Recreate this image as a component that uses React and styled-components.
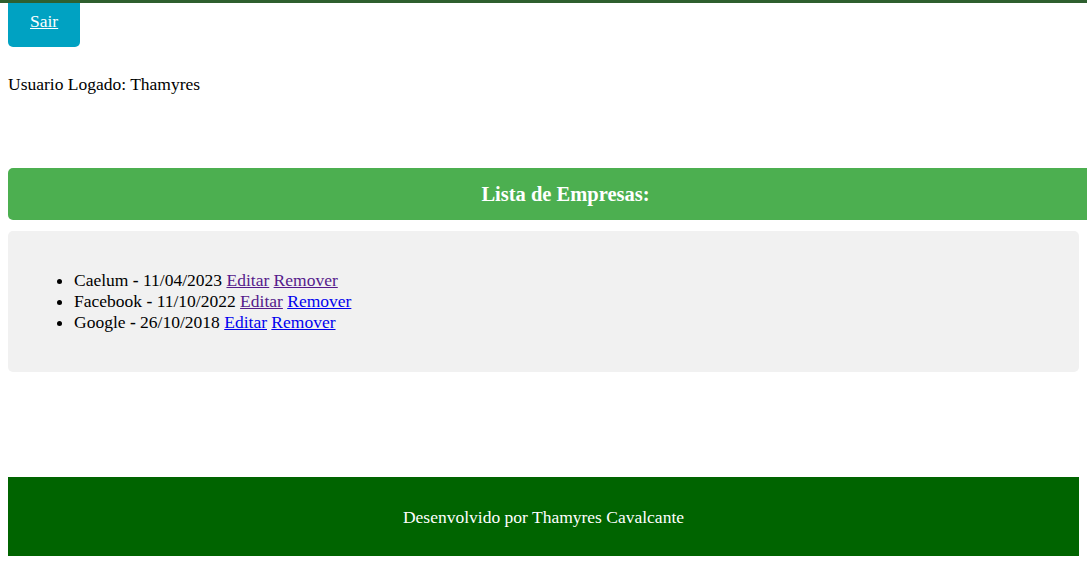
import React from "react";
import styled, { createGlobalStyle } from "styled-components";

const GlobalStyle = createGlobalStyle`
  html, body {
    margin: 0;
    padding: 0;
  }
  body {
    font-family: "Liberation Serif", "Times New Roman", serif;
    font-size: 17.5px;
    line-height: 20px;
    color: #000;
    background: #fff;
    overflow-x: hidden;
  }
`;

const TopStrip = styled.div`
  height: 3px;
  background: #2e5f2f;
`;

const Page = styled.div`
  padding: 0 8px;
`;

const LogoutButton = styled.a`
  display: inline-block;
  background: #00a2c2;
  color: #fff;
  text-decoration: underline;
  padding: 8px 22px 16px;
  border-radius: 0 0 5px 5px;
  cursor: pointer;
`;

const UserLine = styled.p`
  margin: 27px 0 0;
  line-height: 20px;
`;

const ListHeader = styled.h3`
  margin: 74px 0 0;
  width: 100%;
  padding: 15px 22px 14px;
  background: #4caf50;
  color: #fff;
  font-size: 20.5px;
  font-weight: bold;
  line-height: 23px;
  text-align: center;
  border-radius: 5px 0 0 5px;
`;

const ListBox = styled.div`
  margin-top: 11px;
  background: #f1f1f1;
  border-radius: 5px;
  padding: 20px 20px 21px;
`;

const CompanyList = styled.ul`
  margin: 19px 0 18px;
  padding-left: 46px;
  line-height: 21px;
`;

const CompanyItem = styled.li``;

const Dash = styled.b`
  font-weight: bold;
`;

const ItemLink = styled.a`
  color: ${(p) => (p.$visited ? "#551a8b" : "#0000ee")};
  text-decoration: underline;
  cursor: pointer;
`;

const Footer = styled.footer`
  margin-top: 105px;
  height: 79px;
  background: #006400;
  color: #fff;
  display: flex;
  align-items: center;
  justify-content: center;
`;

const companies = [
  { name: "Caelum", date: "11/04/2023", edit: true, remove: true },
  { name: "Facebook", date: "11/10/2022", edit: true, remove: false },
  { name: "Google", date: "26/10/2018", edit: false, remove: false },
];

export default function App() {
  return (
    <>
      <GlobalStyle />
      <TopStrip />
      <Page>
        <LogoutButton>Sair</LogoutButton>
        <UserLine>Usuario Logado: Thamyres</UserLine>
        <ListHeader>Lista de Empresas:</ListHeader>
        <ListBox>
          <CompanyList>
            {companies.map((c) => (
              <CompanyItem key={c.name}>
                {c.name} <Dash>-</Dash> {c.date}{" "}
                <ItemLink $visited={c.edit}>Editar</ItemLink>{" "}
                <ItemLink $visited={c.remove}>Remover</ItemLink>
              </CompanyItem>
            ))}
          </CompanyList>
        </ListBox>
        <Footer>Desenvolvido por Thamyres Cavalcante</Footer>
      </Page>
    </>
  );
}
